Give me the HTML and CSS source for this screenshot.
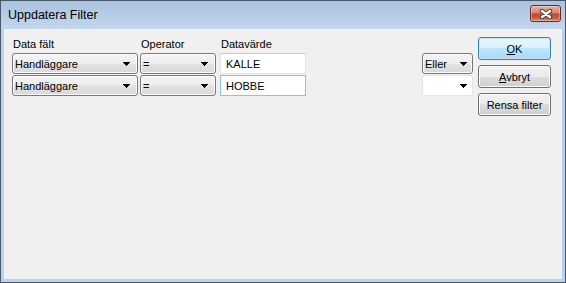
FILE: index.html
```html
<!DOCTYPE html>
<html lang="sv">

<head>
    <meta charset="UTF-8">
    <title>Uppdatera Filter</title>
    <link rel="stylesheet" href="styles.css">
</head>

<body>
    <div class="window">
        <div class="titlebar">
            <span class="title">Uppdatera Filter</span>
            <button class="close" aria-label="Stäng">
                <svg width="14" height="10" viewBox="0 0 14 10">
                    <path d="M3 2L11 8M11 2L3 8" stroke="#3f3f3f" stroke-width="4.4" stroke-linecap="round" />
                    <path d="M3 2L11 8M11 2L3 8" stroke="#fff" stroke-width="2.4" stroke-linecap="round" />
                </svg>
            </button>
        </div>

        <div class="client">
            <div class="filter-grid">
                <div class="col-label">Data fält</div>
                <div class="col-label">Operator</div>
                <div class="col-label value-col">Datavärde</div>

                <div class="combo"><span>Handläggare</span>
                    <svg class="arrow" width="7" height="4" viewBox="0 0 7 4"><path d="M0 0h7v1h-1v1h-1v1h-1v1h-1v-1h-1v-1h-1v-1h-1z" /></svg>
                </div>
                <div class="combo"><span>=</span>
                    <svg class="arrow" width="7" height="4" viewBox="0 0 7 4"><path d="M0 0h7v1h-1v1h-1v1h-1v1h-1v-1h-1v-1h-1v-1h-1z" /></svg>
                </div>
                <div class="textbox value-col">KALLE</div>

                <div class="combo"><span>Handläggare</span>
                    <svg class="arrow" width="7" height="4" viewBox="0 0 7 4"><path d="M0 0h7v1h-1v1h-1v1h-1v1h-1v-1h-1v-1h-1v-1h-1z" /></svg>
                </div>
                <div class="combo"><span>=</span>
                    <svg class="arrow" width="7" height="4" viewBox="0 0 7 4"><path d="M0 0h7v1h-1v1h-1v1h-1v1h-1v-1h-1v-1h-1v-1h-1z" /></svg>
                </div>
                <div class="textbox value-col focused">HOBBE</div>
            </div>

            <div class="logic">
                <div class="combo small"><span>Eller</span>
                    <svg class="arrow" width="7" height="4" viewBox="0 0 7 4"><path d="M0 0h7v1h-1v1h-1v1h-1v1h-1v-1h-1v-1h-1v-1h-1z" /></svg>
                </div>
                <div class="combo small empty">
                    <svg class="arrow" width="7" height="4" viewBox="0 0 7 4"><path d="M0 0h7v1h-1v1h-1v1h-1v1h-1v-1h-1v-1h-1v-1h-1z" /></svg>
                </div>
            </div>

            <div class="buttons">
                <button class="btn default"><u>O</u>K</button>
                <button class="btn"><u>A</u>vbryt</button>
                <button class="btn">Rensa filter</button>
            </div>
        </div>
    </div>
</body>

</html>
```

FILE: styles.css
```css
body {
    margin: 0;
    font-family: 'Liberation Sans', Arial, sans-serif;
    font-size: 11px;
    color: #000;
}

.window {
    width: 566px;
    height: 283px;
    box-sizing: border-box;
    border: 1px solid #4b5868;
    display: flex;
    flex-direction: column;
    background: linear-gradient(#a9c2df, #c3d7ee 28px, #b6d2f0 29px, #b6d2f0);
}

.window .titlebar {
    height: 28px;
    display: flex;
    align-items: center;
    padding-left: 7px;
}

.window .titlebar .title {
    font-size: 12.5px;
    line-height: 14px;
    padding-bottom: 1px;
    flex: 1;
}

.window .titlebar .close {
    align-self: flex-start;
    margin: 4px 4px 0 0;
    width: 31px;
    height: 17px;
    padding: 0;
    box-sizing: border-box;
    border: 1px solid #6a2a20;
    border-radius: 3px;
    background: linear-gradient(#eaae9f, #d98470 45%, #c34a30 52%, #c9553a 75%, #e0896c);
    box-shadow: inset 0 0 0 1px rgba(255, 255, 255, 0.35);
    display: flex;
    align-items: center;
    justify-content: center;
}

.window .client {
    flex: 1;
    margin: 0 3px 3px 3px;
    background-color: #f0f0f0;
    display: flex;
    align-items: flex-start;
    padding: 8px 11px 0 8px;
}

.client .filter-grid {
    margin-top: 1px;
    display: grid;
    grid-template-columns: 126px 76px 88px;
    grid-template-rows: 14px 21px 21px;
    column-gap: 2px;
    row-gap: 1px;
}

.client .filter-grid .value-col {
    margin-left: 2px;
}

.client .col-label {
    line-height: 13px;
    padding-left: 1px;
}

.client .combo {
    box-sizing: border-box;
    height: 21px;
    border: 1px solid #7a7a7a;
    border-radius: 3px;
    background: linear-gradient(#f4f4f4, #ededed 50%, #e3e3e3 50%, #d9d9d9);
    box-shadow: inset 0 0 0 1px #fafafa;
    display: flex;
    align-items: center;
    padding-left: 2px;
}

.client .combo .arrow {
    margin-left: auto;
    margin-right: 7px;
    fill: #000;
}

.client .combo.small .arrow {
    margin-right: 5px;
}

.client .combo.empty {
    background: #fff;
    border-color: #e6e6e6;
    box-shadow: none;
}

.client .textbox {
    box-sizing: border-box;
    height: 21px;
    background-color: #fff;
    border: 1px solid #e2e3ea;
    border-top-color: #c9cbd2;
    display: flex;
    align-items: center;
    padding-left: 5px;
}

.client .textbox.focused {
    border-color: #8fbfe9;
}

.client .logic {
    margin: 16px 5px 0 auto;
    width: 51px;
    display: flex;
    flex-direction: column;
    gap: 1px;
}

.client .buttons {
    width: 73px;
    display: flex;
    flex-direction: column;
    gap: 5px;
}

.client .btn {
    height: 23px;
    padding: 0;
    font-family: 'Liberation Sans', Arial, sans-serif;
    font-size: 11px;
    color: #000;
    border: 1px solid #707070;
    border-radius: 3px;
    background: linear-gradient(#f2f2f2, #ebebeb 50%, #dddddd 50%, #cfcfcf);
    box-shadow: inset 0 0 0 1px #fcfcfc;
}

.client .btn.default {
    border-color: #3c7fb1;
    background: linear-gradient(#eaf6fd, #d9f0fc 50%, #bee6fd 50%, #a7d9f5);
    box-shadow: inset 0 0 0 1px #c5e6f9;
}
```
